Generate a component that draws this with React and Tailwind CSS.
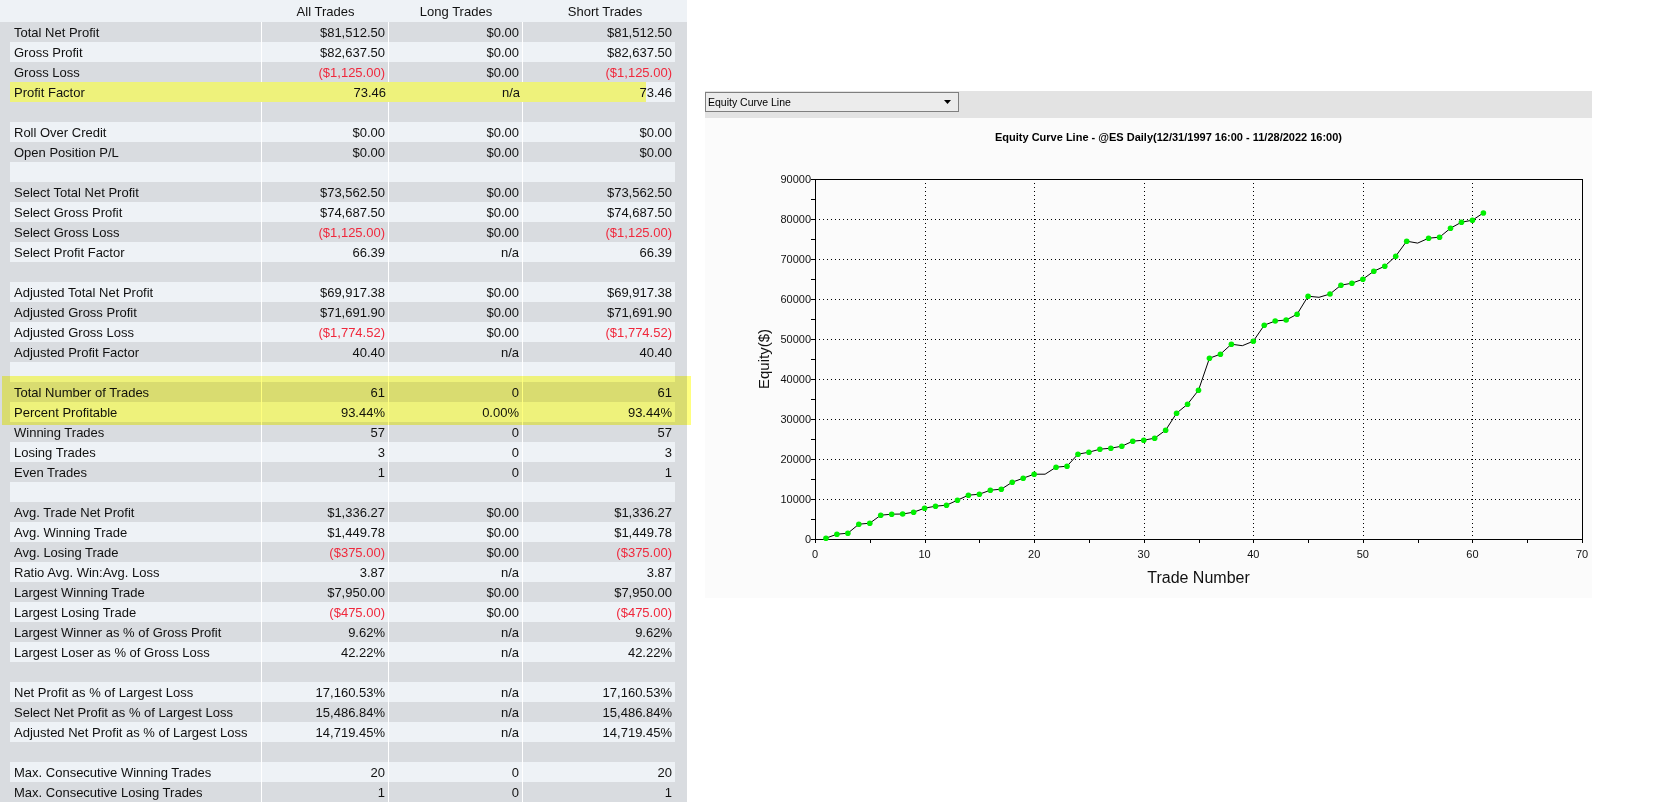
import React from 'react';

const rows = [
  ['Total Net Profit', '$81,512.50', '$0.00', '$81,512.50'],
  ['Gross Profit', '$82,637.50', '$0.00', '$82,637.50'],
  ['Gross Loss', '($1,125.00)', '$0.00', '($1,125.00)'],
  ['Profit Factor', '73.46', 'n/a', '73.46', 'hl'],
  null,
  ['Roll Over Credit', '$0.00', '$0.00', '$0.00'],
  ['Open Position P/L', '$0.00', '$0.00', '$0.00'],
  null,
  ['Select Total Net Profit', '$73,562.50', '$0.00', '$73,562.50'],
  ['Select Gross Profit', '$74,687.50', '$0.00', '$74,687.50'],
  ['Select Gross Loss', '($1,125.00)', '$0.00', '($1,125.00)'],
  ['Select Profit Factor', '66.39', 'n/a', '66.39'],
  null,
  ['Adjusted Total Net Profit', '$69,917.38', '$0.00', '$69,917.38'],
  ['Adjusted Gross Profit', '$71,691.90', '$0.00', '$71,691.90'],
  ['Adjusted Gross Loss', '($1,774.52)', '$0.00', '($1,774.52)'],
  ['Adjusted Profit Factor', '40.40', 'n/a', '40.40'],
  null,
  ['Total Number of Trades', '61', '0', '61'],
  ['Percent Profitable', '93.44%', '0.00%', '93.44%'],
  ['Winning Trades', '57', '0', '57'],
  ['Losing Trades', '3', '0', '3'],
  ['Even Trades', '1', '0', '1'],
  null,
  ['Avg. Trade Net Profit', '$1,336.27', '$0.00', '$1,336.27'],
  ['Avg. Winning Trade', '$1,449.78', '$0.00', '$1,449.78'],
  ['Avg. Losing Trade', '($375.00)', '$0.00', '($375.00)'],
  ['Ratio Avg. Win:Avg. Loss', '3.87', 'n/a', '3.87'],
  ['Largest Winning Trade', '$7,950.00', '$0.00', '$7,950.00'],
  ['Largest Losing Trade', '($475.00)', '$0.00', '($475.00)'],
  ['Largest Winner as % of Gross Profit', '9.62%', 'n/a', '9.62%'],
  ['Largest Loser as % of Gross Loss', '42.22%', 'n/a', '42.22%'],
  null,
  ['Net Profit as % of Largest Loss', '17,160.53%', 'n/a', '17,160.53%'],
  ['Select Net Profit as % of Largest Loss', '15,486.84%', 'n/a', '15,486.84%'],
  ['Adjusted Net Profit as % of Largest Loss', '14,719.45%', 'n/a', '14,719.45%'],
  null,
  ['Max. Consecutive Winning Trades', '20', '0', '20'],
  ['Max. Consecutive Losing Trades', '1', '0', '1'],
];

// equity after each trade; losers / even trade get no marker
const equity = [
  200, 1200, 1450, 3700, 3950, 5950, 6200, 6250, 6700, 7700,
  8200, 8450, 9700, 10950, 11200, 12200, 12450, 14200, 15200, 16200,
  16200, 17950, 18200, 21200, 21700, 22450, 22700, 23200, 24450, 24700,
  25200, 27200, 31450, 33700, 37200, 45200, 46200, 48700, 48325, 49450,
  53450, 54500, 54750, 56200, 60700, 60425, 61250, 63450, 63950, 64950,
  66950, 68200, 70700, 74450, 73975, 75200, 75450, 77700, 79200, 79700,
  81512,
];

function Val({ v }) {
  const red = v.startsWith('(');
  return (
    <div className={red ? 'text-right pr-[3px] text-[#f0283c]' : 'text-right pr-[3px]'}>{v}</div>
  );
}

function StatsTable() {
  return (
    <div className="relative w-[687px] shrink-0 bg-[#d9dce0]">
      <div className="grid h-[22px] grid-cols-[262px_127px_134px_164px] items-center bg-[#eef2f6]">
        <div />
        <div className="text-center">All Trades</div>
        <div className="text-center">Long Trades</div>
        <div className="text-center">Short Trades</div>
      </div>
      <div className="pl-[10px] pr-[12px]">
        {rows.map((r, i) => {
          const dark = i % 2 === 0;
          const bg = dark ? 'bg-[#d9dce0]' : 'bg-[#eef2f6]';
          if (r && r[4] === 'hl') {
            return (
              <div
                key={i}
                className="grid h-5 grid-cols-[252px_127px_134px_152px] items-center bg-[linear-gradient(to_right,#eef27b_636px,#eef2f6_636px)]"
              >
                <div className="pl-1">{r[0]}</div>
                <Val v={r[1]} />
                <Val v={r[2]} />
                <Val v={r[3]} />
              </div>
            );
          }
          return (
            <div key={i} className="grid h-5 grid-cols-[251px_126px_133px_152px] gap-x-px bg-white">
              <div className={`${bg} flex items-center pl-1`}>{r ? r[0] : ''}</div>
              <div className={`${bg} flex items-center justify-end`}>{r ? <Val v={r[1]} /> : null}</div>
              <div className={`${bg} flex items-center justify-end`}>{r ? <Val v={r[2]} /> : null}</div>
              <div className={`${bg} flex items-center justify-end`}>{r ? <Val v={r[3]} /> : null}</div>
            </div>
          );
        })}
      </div>
      {/* highlighter marker over trade count rows */}
      <div className="pointer-events-none absolute left-[2px] top-[376px] h-[49px] w-[689px] bg-[#ffff00]/50 mix-blend-multiply" />
    </div>
  );
}

function EquityChart() {
  const L = 110, R = 877, T = 61, B = 421;
  const xs = (n) => L + (n * (R - L)) / 70;
  const ys = (v) => B - v / 250;
  const pts = equity.map((v, i) => [xs(i + 1), ys(v)]);
  const losers = new Set([20, 38, 45, 54]);
  const grid = [];
  for (let k = 1; k <= 8; k++) {
    const y = Math.round(ys(k * 10000)) + 0.5;
    grid.push(<line key={'h' + k} x1={L} x2={R} y1={y} y2={y} stroke="#000" strokeDasharray="1 3" />);
  }
  for (let k = 1; k <= 6; k++) {
    const x = Math.round(xs(k * 10)) + 0.5;
    grid.push(<line key={'v' + k} x1={x} x2={x} y1={T} y2={B} stroke="#000" strokeDasharray="1 3" />);
  }
  const ticks = [];
  for (let k = 0; k <= 18; k++) {
    const y = Math.round(ys(k * 5000)) + 0.5;
    ticks.push(<line key={'ty' + k} x1={L - 4} x2={L} y1={y} y2={y} stroke="#000" />);
  }
  for (let k = 0; k <= 14; k++) {
    const x = Math.round(xs(k * 5)) + 0.5;
    ticks.push(<line key={'tx' + k} x1={x} x2={x} y1={B} y2={B + 4} stroke="#000" />);
  }
  return (
    <svg width="887" height="480" className="block bg-[#fbfbfb]" fontFamily="'Liberation Sans', Arial, sans-serif">
      <text x="290" y="23" fontSize="11" fontWeight="bold" fill="#000">
        Equity Curve Line - @ES Daily(12/31/1997 16:00 - 11/28/2022 16:00)
      </text>
      {grid}
      <rect x={L + 0.5} y={T + 0.5} width={R - L} height={B - T} fill="none" stroke="#000" />
      {ticks}
      {Array.from({ length: 10 }, (_, k) => (
        <text key={'ly' + k} x={L - 4} y={ys(k * 10000) + 4} fontSize="11" textAnchor="end" fill="#111">
          {k * 10000}
        </text>
      ))}
      {Array.from({ length: 8 }, (_, k) => (
        <text key={'lx' + k} x={xs(k * 10)} y={440} fontSize="11" textAnchor="middle" fill="#111">
          {k * 10}
        </text>
      ))}
      <text x={(L + R) / 2} y="465" fontSize="16" textAnchor="middle" fill="#111">Trade Number</text>
      <text x="0" y="0" fontSize="15" textAnchor="middle" fill="#111" transform={`translate(64 ${(T + B) / 2}) rotate(-90)`}>
        Equity($)
      </text>
      <polyline points={pts.map((p) => p.join(',')).join(' ')} fill="none" stroke="#000" strokeWidth="1" />
      {pts.map((p, i) => (losers.has(i) ? null : <circle key={i} cx={p[0]} cy={p[1]} r="2.8" fill="#00f000" />))}
    </svg>
  );
}

export default function App() {
  return (
    <div className="flex h-[802px] w-[1658px] overflow-hidden bg-white font-['Liberation_Sans',Arial,sans-serif] text-[13px] leading-none text-[#111]">
      <StatsTable />
      <div className="ml-[18px] w-[887px] shrink-0 pt-[91px]">
        <div className="h-[27px] bg-[#e3e3e3] pt-px">
          <div className="flex h-5 w-[254px] items-center justify-between border border-[#7f7f7f] bg-[#ececec] pl-[2px] pr-[7px] text-[10.5px] text-black">
            <span>Equity Curve Line</span>
            <svg width="7" height="4" viewBox="0 0 7 4">
              <path d="M0 0h7L3.5 4z" fill="#000" />
            </svg>
          </div>
        </div>
        <EquityChart />
      </div>
    </div>
  );
}
